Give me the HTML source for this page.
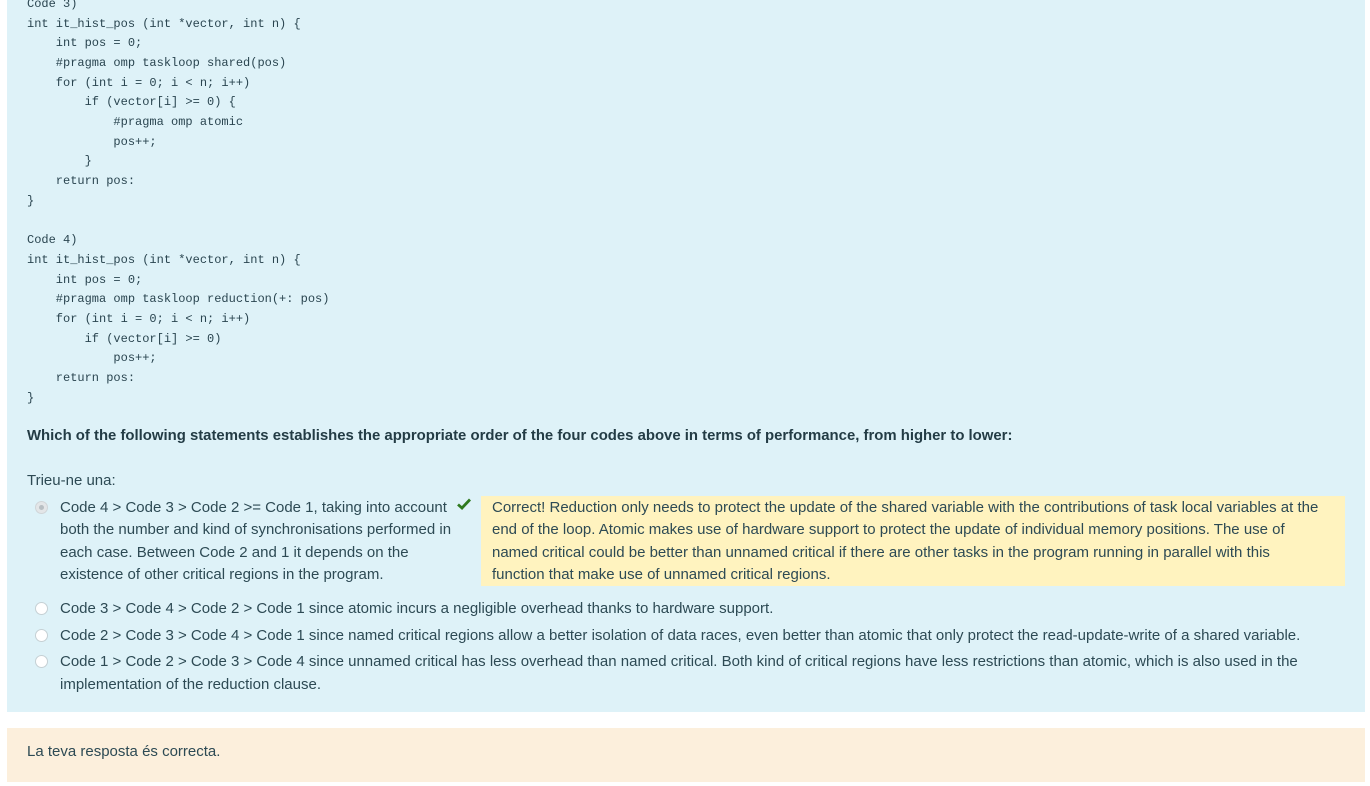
<!DOCTYPE html>
<html><head><meta charset="utf-8"><style>
*{margin:0;padding:0;box-sizing:border-box}
body{width:1370px;height:786px;background:#fff;position:relative;overflow:hidden;font-family:"Liberation Sans",sans-serif;color:#2d4a54}
.blue{position:absolute;left:7px;top:0;width:1358px;height:712px;background:#def2f8}
.orange{position:absolute;left:7px;top:728px;width:1358px;height:54px;background:#fcefdc}
.c{position:absolute;font-family:"Liberation Mono",monospace;font-size:12px;white-space:pre;color:#2a4550;line-height:14px}
.t{position:absolute;font-size:15px;white-space:nowrap;line-height:18px}
.fb{position:absolute;left:481px;top:496px;width:864px;height:90px;background:#fff3bf}
.r{position:absolute;width:13px;height:13px;border-radius:50%;border:1px solid #c5d0d4;background:#fff}
</style></head><body>
<div class="blue"></div>
<div class="orange"></div>
<div class="c" style="left:27px;top:-3px">Code 3)</div>
<div class="c" style="left:27px;top:17px">int it_hist_pos (int *vector, int n) {</div>
<div class="c" style="left:27px;top:36px">    int pos = 0;</div>
<div class="c" style="left:27px;top:56px">    #pragma omp taskloop shared(pos)</div>
<div class="c" style="left:27px;top:76px">    for (int i = 0; i &lt; n; i++)</div>
<div class="c" style="left:27px;top:95px">        if (vector[i] &gt;= 0) {</div>
<div class="c" style="left:27px;top:115px">            #pragma omp atomic</div>
<div class="c" style="left:27px;top:135px">            pos++;</div>
<div class="c" style="left:27px;top:154px">        }</div>
<div class="c" style="left:27px;top:174px">    return pos:</div>
<div class="c" style="left:27px;top:194px">}</div>
<div class="c" style="left:27px;top:233px">Code 4)</div>
<div class="c" style="left:27px;top:253px">int it_hist_pos (int *vector, int n) {</div>
<div class="c" style="left:27px;top:273px">    int pos = 0;</div>
<div class="c" style="left:27px;top:292px">    #pragma omp taskloop reduction(+: pos)</div>
<div class="c" style="left:27px;top:312px">    for (int i = 0; i &lt; n; i++)</div>
<div class="c" style="left:27px;top:332px">        if (vector[i] &gt;= 0)</div>
<div class="c" style="left:27px;top:351px">            pos++;</div>
<div class="c" style="left:27px;top:371px">    return pos:</div>
<div class="c" style="left:27px;top:391px">}</div>
<div class="t" style="left:27px;top:427px;font-weight:bold;font-size:14.9px;color:#233c45">Which of the following statements establishes the appropriate order of the four codes above in terms of performance, from higher to lower:</div>
<div class="t" style="left:27px;top:472px">Trieu-ne una:</div>
<div class="r" style="left:35px;top:501px;background:#e3e6e8;border-color:#d0d5d8"><div style="position:absolute;left:3px;top:3px;width:5px;height:5px;border-radius:50%;background:#b8bfc3"></div></div>
<div class="t" style="left:60px;top:499px">Code 4 &gt; Code 3 &gt; Code 2 &gt;= Code 1, taking into account</div>
<div class="t" style="left:60px;top:521px">both the number and kind of synchronisations performed in</div>
<div class="t" style="left:60px;top:544px">each case. Between Code 2 and 1 it depends on the</div>
<div class="t" style="left:60px;top:566px">existence of other critical regions in the program.</div>
<svg style="position:absolute;left:457px;top:498px" width="14" height="12" viewBox="0 0 14 12"><path d="M1 6.5 L5 10 L13 1.5" fill="none" stroke="#2f7a1f" stroke-width="2.8"/></svg>
<div class="fb"></div>
<div class="t" style="left:492px;top:499px">Correct! Reduction only needs to protect the update of the shared variable with the contributions of task local variables at the</div>
<div class="t" style="left:492px;top:521px">end of the loop. Atomic makes use of hardware support to protect the update of individual memory positions. The use of</div>
<div class="t" style="left:492px;top:544px">named critical could be better than unnamed critical if there are other tasks in the program running in parallel with this</div>
<div class="t" style="left:492px;top:566px">function that make use of unnamed critical regions.</div>
<div class="r" style="left:35px;top:602px"></div>
<div class="t" style="left:60px;top:600px">Code 3 &gt; Code 4 &gt; Code 2 &gt; Code 1 since atomic incurs a negligible overhead thanks to hardware support.</div>
<div class="r" style="left:35px;top:629px"></div>
<div class="t" style="left:60px;top:627px">Code 2 &gt; Code 3 &gt; Code 4 &gt; Code 1 since named critical regions allow a better isolation of data races, even better than atomic that only protect the read-update-write of a shared variable.</div>
<div class="r" style="left:35px;top:655px"></div>
<div class="t" style="left:60px;top:653px">Code 1 &gt; Code 2 &gt; Code 3 &gt; Code 4 since unnamed critical has less overhead than named critical. Both kind of critical regions have less restrictions than atomic, which is also used in the</div>
<div class="t" style="left:60px;top:676px">implementation of the reduction clause.</div>
<div class="t" style="left:27px;top:743px">La teva resposta és correcta.</div>
</body></html>
